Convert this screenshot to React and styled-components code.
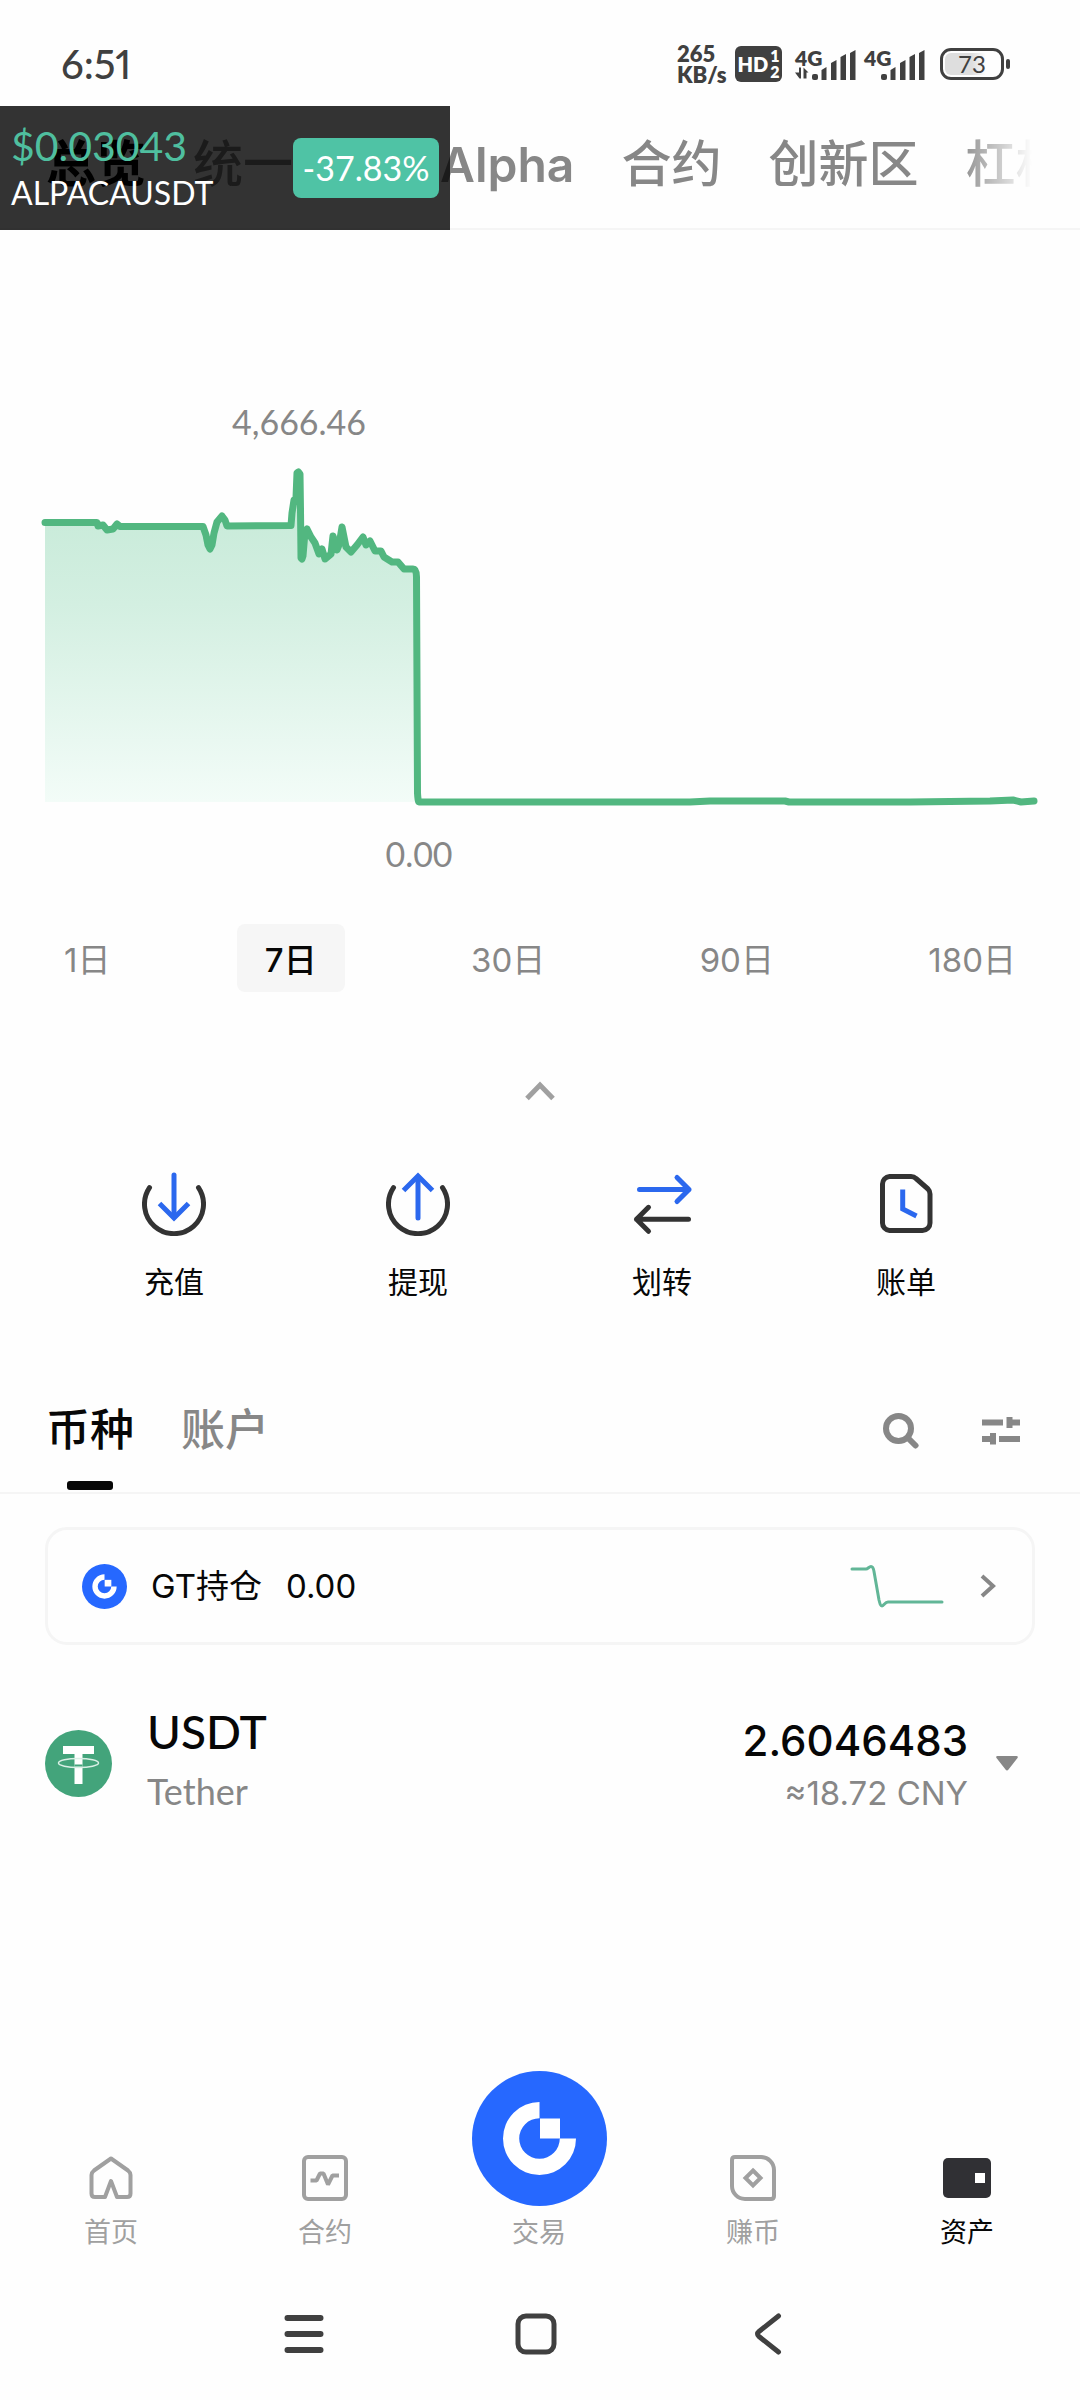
import React, { useState } from 'react';
import styled, { createGlobalStyle } from 'styled-components';

const GlobalStyle = createGlobalStyle`
    * {
        box-sizing: border-box;
    }
    body {
        margin: 0;
        background: #fefefe;
        color: #070707;
        font-family: Inter, 'Noto Sans CJK SC', sans-serif;
    }
    button {
        margin: 0;
        padding: 0;
        border: none;
        background: none;
        color: inherit;
        font: inherit;
        cursor: pointer;
    }
    a {
        color: inherit;
        text-decoration: none;
    }
    svg {
        display: block;
        flex-shrink: 0;
    }
`;

const Page = styled.div`
    display: flex;
    flex-direction: column;
    min-height: 100vh;
    overflow: hidden;
`;

/* status bar */

const StatusBar = styled.div`
    display: flex;
    justify-content: space-between;
    align-items: center;
    height: 106px;
    padding: 22px 70px 0 61px;
    color: #404040;
    font-family: Lato, sans-serif;
`;

const Clock = styled.div`
    font-size: 40px;
    line-height: 48px;
    font-weight: 500;
    font-variant-numeric: proportional-nums;
`;

const StatusIcons = styled.div`
    display: flex;
    align-items: center;
`;

const NetSpeed = styled.div`
    width: 58px;
    font-size: 22px;
    line-height: 21px;
    font-weight: 800;
`;

const HdBadge = styled.div`
    display: flex;
    align-items: center;
    justify-content: center;
    gap: 2px;
    width: 47px;
    height: 36px;
    margin-right: 12px;
    border-radius: 6px;
    background: #404040;
    color: #fff;
    font-size: 20px;
    font-weight: 800;
`;

const HdSlots = styled.span`
    display: flex;
    flex-direction: column;
    font-size: 16px;
    line-height: 16px;
`;

const Signal = styled.div`
    position: relative;
    width: 64px;
    margin-right: 5px;

    span {
        position: absolute;
        top: -1px;
        left: 1px;
        font-size: 21px;
        line-height: 21px;
        font-weight: 800;
    }
`;

const Battery = styled.div`
    display: flex;
    align-items: center;
    margin-left: 8px;

    &::after {
        content: '';
        width: 4px;
        height: 10px;
        margin-left: 2px;
        border-radius: 2px;
        background: #404040;
    }
`;

const BatteryBody = styled.div`
    width: 64px;
    height: 32px;
    padding: 2px;
    border: 3px solid #404040;
    border-radius: 11px;
    font-size: 24px;
    line-height: 22px;
    text-align: center;

    span {
        display: block;
        border-radius: 6px;
        background: linear-gradient(90deg, #dedede 50%, #fefefe 76%);
    }
`;

/* header */

const Header = styled.header`
    position: relative;
    border-bottom: 2px solid #f5f5f5;
`;

const TopTabs = styled.nav`
    display: flex;
    align-items: center;
    gap: 47px;
    height: 122px;
    margin-right: 48px;
    padding: 0 0 6px 46px;
    overflow: hidden;
    mask-image: linear-gradient(90deg, #000 calc(100% - 75px), transparent);
`;

const TopTab = styled.button`
    flex-shrink: 0;
    color: ${({ $active }) => ($active ? '#000' : '#878787')};
    font-size: 50px;
    line-height: 60px;
    font-weight: ${({ $active }) => ($active ? 700 : 500)};
    white-space: nowrap;
`;

const LatinLabel = styled.span`
    font-size: 48px;
    font-weight: 600;
`;

const Ticker = styled.aside`
    position: absolute;
    top: 0;
    left: 0;
    display: flex;
    justify-content: space-between;
    align-items: center;
    width: 450px;
    height: 124px;
    padding: 0 11px;
    background: rgba(0, 0, 0, 0.8);
    color: #fff;
    font-family: Lato, sans-serif;
`;

const TickerPrice = styled.div`
    color: #4fbf9f;
    font-size: 41px;
    line-height: 50px;
`;

const TickerSymbol = styled.div`
    font-size: 32px;
    line-height: 44px;
`;

const TickerChange = styled.div`
    width: 146px;
    border-radius: 8px;
    background: #4fc3a5;
    font-size: 34px;
    line-height: 60px;
    text-align: center;
`;

/* chart */

const Chart = styled.svg`
    width: 100%;
    height: auto;

    text {
        fill: #878787;
        font-family: Lato, sans-serif;
        font-size: 34px;
        text-anchor: middle;
    }
`;

const Ranges = styled.div`
    display: flex;
    justify-content: space-between;
    margin-top: 34px;
    padding: 0 36px;
`;

const RangeButton = styled.button`
    padding: 4px 28px 0;
    border-radius: 8px;
    background: ${({ $active }) => ($active ? '#f6f6f6' : 'none')};
    color: ${({ $active }) => ($active ? '#070707' : '#878787')};
    font-size: 33px;
    line-height: 64px;
    font-weight: ${({ $active }) => ($active ? 500 : 400)};
`;

const Collapse = styled.button`
    align-self: center;
    margin-top: 80px;
    padding: 9px;
`;

/* actions */

const Actions = styled.div`
    display: grid;
    grid-template-columns: repeat(4, 1fr);
    margin-top: 62px;
    padding: 0 52px;
`;

const Action = styled.button`
    display: flex;
    flex-direction: column;
    align-items: center;
    gap: 24px;
    font-size: 30px;
    line-height: 44px;
`;

/* asset list */

const ListHeader = styled.div`
    display: flex;
    justify-content: space-between;
    margin-top: 98px;
    padding: 0 60px 0 46px;
    border-bottom: 2px solid #f5f5f5;
`;

const ListTabs = styled.div`
    display: flex;
    gap: 47px;
`;

const ListTab = styled.button`
    display: flex;
    flex-direction: column;
    align-items: center;
    color: ${({ $active }) => ($active ? '#070707' : '#878787')};
    font-size: 44px;
    line-height: 56px;
    font-weight: 500;

    &::after {
        content: '';
        width: 46px;
        height: 9px;
        margin: 23px 0 2px;
        border-radius: 3px;
        background: ${({ $active }) => ($active ? '#070707' : 'none')};
    }
`;

const ListTools = styled.div`
    display: flex;
    align-items: center;
    gap: 63px;
    padding-bottom: 33px;
`;

const HoldingCard = styled.a`
    display: flex;
    align-items: center;
    margin: 33px 45px 0;
    padding: 0 36px 0 34px;
    height: 118px;
    border: 3px solid #f5f5f5;
    border-radius: 22px;
    font-size: 33px;
    line-height: 46px;
`;

const HoldingName = styled.span`
    margin: 0 24px;
`;

const HoldingTrend = styled.span`
    display: flex;
    align-items: center;
    gap: 36px;
    margin-left: auto;
`;

const AssetRow = styled.div`
    display: flex;
    align-items: center;
    margin-top: 59px;
    padding: 0 62px 0 45px;
`;

const AssetName = styled.div`
    margin-left: 35px;
    font-family: Lato, sans-serif;
`;

const Symbol = styled.div`
    font-size: 46px;
    line-height: 56px;
    font-weight: 500;
`;

const FullName = styled.div`
    color: #878787;
    font-size: 36px;
    line-height: 62px;
`;

const Balance = styled.div`
    margin-left: auto;
    text-align: right;
`;

const Amount = styled.div`
    font-size: 42px;
    line-height: 60px;
    font-weight: 500;
`;

const Fiat = styled.div`
    color: #878787;
    font-size: 33px;
    line-height: 44px;
`;

const Expand = styled.button`
    margin-left: 28px;
`;

/* bottom bars */

const BottomNav = styled.nav`
    display: flex;
    align-items: flex-end;
    margin-top: auto;
    padding: 0 6px 18px 4px;
`;

const NavItem = styled.a`
    display: flex;
    flex: 1;
    flex-direction: column;
    align-items: center;
    gap: 10px;
    color: ${({ $active }) => ($active ? '#070707' : '#a0a0a0')};
    font-size: 27px;
    line-height: 34px;
`;

const SystemBar = styled.div`
    display: flex;
    justify-content: center;
    align-items: center;
    gap: 184px;
    height: 132px;
    padding-right: 9px;
`;

const SignalBars = ({ data }) => (
    <svg width="64" height="32" viewBox="0 0 64 32" fill="#404040">
        {data && (
            <path d="M1 24.5h4v-5h2v11H5.500zM9.500 19.500l5 5h-2v6h-3z" />
        )}
        <rect x="18" y="26" width="6" height="6" rx="2" />
        <path d="M27.500 32v-10l5-3v13zM37 32V15l5.500-3v20zM46.500 32V9l5.500-3v26zM56 32V5l5.500-3v30z" />
    </svg>
);

const GateLogo = ({ size }) => (
    <svg width={size} height={size} viewBox="0 0 135 135">
        <circle cx="67.5" cy="67.5" r="67.5" fill="#2668ff" />
        <path
            d="M67.500 31a36.500 36.500 0 1 0 36.500 36.500H87.800A20.300 20.300 0 1 1 67.500 47.200z"
            fill="#fff"
        />
        <path d="M68 47.500h20v20H68z" fill="#fff" />
    </svg>
);

const Stroke = ({ size = 64, height, color = '#333', width = 5, children }) => (
    <svg
        width={size}
        height={height || size}
        viewBox={`0 0 ${size} ${height || size}`}
        fill="none"
        stroke={color}
        strokeWidth={width}
        strokeLinecap="round"
        strokeLinejoin="round"
    >
        {children}
    </svg>
);

const BLUE = '#2b68ee';

const DepositIcon = () => (
    <Stroke>
        <path d="M7.500 15.700a29.500 29.500 0 1 0 49 0" />
        <path d="M32 3v42" stroke={BLUE} />
        <path d="M17.500 31.500 32 46l14.500-14.500" stroke={BLUE} strokeLinecap="butt" strokeLinejoin="miter" />
    </Stroke>
);

const WithdrawIcon = () => (
    <Stroke>
        <path d="M7.500 15.700a29.500 29.500 0 1 0 49 0" />
        <path d="M32 46V5" stroke={BLUE} />
        <path d="M17.500 18.500 32 4l14.500 14.500" stroke={BLUE} strokeLinecap="butt" strokeLinejoin="miter" />
    </Stroke>
);

const TransferIcon = () => (
    <Stroke>
        <path d="M9.500 17.500H59M47 5.500l12 12-12 12" stroke={BLUE} />
        <path d="M58.500 47.300H6.500M18.500 35.300l-12 12 12 12" />
    </Stroke>
);

const BillIcon = () => (
    <Stroke>
        <path d="M15.500 4.500H37q3 0 5 2L54 17q2 2 2 5v29a7.500 7.500 0 0 1-7.500 7.500h-33A7.500 7.500 0 0 1 8.500 51V12a7.500 7.500 0 0 1 7-7.500z" />
        <path d="M28.700 17.500V37L42.500 44" stroke={BLUE} strokeLinecap="butt" strokeLinejoin="miter" />
    </Stroke>
);

const HomeIcon = () => (
    <Stroke size={48} height={52} color="#a0a0a0" width={4}>
        <path d="M24 4.500 7 16.500Q4.500 18.500 4.500 21v18.500q0 3.500 3.500 3.500h10l6-16 6 16h10q3.500 0 3.500-3.500V21q0-2.500-2.500-4.500z" />
    </Stroke>
);

const ContractIcon = () => (
    <Stroke size={48} height={52} color="#a0a0a0" width={4}>
        <rect x="3" y="3" width="42" height="42" rx="4" />
        <path
            d="M9.500 26.500h6l3.500-7h3.500l4.500 11 4.500-9H38"
            strokeLinecap="butt"
            strokeLinejoin="bevel"
        />
    </Stroke>
);

const EarnIcon = () => (
    <Stroke size={48} height={52} color="#a0a0a0" width={4}>
        <path d="M6 3h26a13 13 0 0 1 13 13v26q0 3-3 3H16A13 13 0 0 1 3 32V6q0-3 3-3z" />
        <path d="M24 16.500 31.500 24 24 31.500 16.500 24z" strokeLinejoin="miter" />
    </Stroke>
);

const WalletIcon = () => (
    <svg width="48" height="52" viewBox="0 0 48 52">
        <rect y="4" width="48" height="40" rx="5" fill="#303034" />
        <rect x="32" y="19" width="10" height="10" fill="#fff" />
    </svg>
);

const TetherIcon = () => (
    <svg width="67" height="67" viewBox="0 0 67 67">
        <circle cx="33.5" cy="33.5" r="33.5" fill="#43a47b" />
        <path d="M18 16h31v8h-11.500v30h-8V24H18z" fill="#fff" />
        <ellipse cx="33.5" cy="33" rx="20" ry="4.500" fill="none" stroke="#d9efe5" strokeWidth="1.500" />
        <path d="M29.500 34.500h8v2h-8z" fill="#43a47b" />
    </svg>
);

const LINE =
    'M45 522.500H97L98 526L103 525L107 530L113 529L117 524L120 526.500H203L206 535L208 545L210 549L212 545L214 533' +
    'L217 522L222 516L225 520L227 526L291 525.500L292 513L294 500L296 498L297 473L298.500 472L300 474L300.500 510L301 558' +
    'L302 559L303 556L305 532L307 529L311 537L315 543L319 554L322 549L325 559L331 554L333 536L337 550L339 545' +
    'L342 527L346 547L351 552L357 545L363 537L366 545L370 541L375 551L381 551L384 557L392 562L398 562L404 569H413' +
    'Q416.500 569 416.500 577L417.500 793Q418 802 419 802';

const TAIL = 'H690L710 801H785L789 802H910L990 801L1013 800L1021 802L1034 801';

const PortfolioChart = () => (
    <Chart viewBox="0 230 1080 660" role="img" aria-label="4,666.46 – 0.00">
        <defs>
            <linearGradient id="area" x1="0" y1="0" x2="0" y2="1">
                <stop offset="0" stopColor="#c4e9d6" />
                <stop offset="0.4" stopColor="#d3efe1" />
                <stop offset="1" stopColor="#f3fcf8" />
            </linearGradient>
        </defs>
        <path d={`${LINE}H45z`} fill="url(#area)" />
        <path
            d={LINE + TAIL}
            fill="none"
            stroke="#52b780"
            strokeWidth="7"
            strokeLinecap="round"
            strokeLinejoin="round"
        />
        <text x="299" y="435">4,666.46</text>
        <text x="419" y="867">0.00</text>
    </Chart>
);

const topTabs = ['总览', '统一账户', 'Alpha', '合约', '创新区', '杠杆'];
const ranges = ['1日', '7日', '30日', '90日', '180日'];
const listTabs = ['币种', '账户'];

const actions = [
    { label: '充值', icon: <DepositIcon /> },
    { label: '提现', icon: <WithdrawIcon /> },
    { label: '划转', icon: <TransferIcon /> },
    { label: '账单', icon: <BillIcon /> },
];

const navItems = [
    { label: '首页', icon: <HomeIcon /> },
    { label: '合约', icon: <ContractIcon /> },
    { label: '交易', icon: <GateLogo size={135} /> },
    { label: '赚币', icon: <EarnIcon /> },
    { label: '资产', icon: <WalletIcon />, active: true },
];

const App = () => {
    const [range, setRange] = useState('7日');
    const [listTab, setListTab] = useState('币种');

    return (
        <Page>
            <GlobalStyle />
            <StatusBar>
                <Clock>6:51</Clock>
                <StatusIcons>
                    <NetSpeed>
                        265
                        <br />
                        KB/s
                    </NetSpeed>
                    <HdBadge>
                        HD
                        <HdSlots>
                            <span>1</span>
                            <span>2</span>
                        </HdSlots>
                    </HdBadge>
                    <Signal>
                        <span>4G</span>
                        <SignalBars data />
                    </Signal>
                    <Signal>
                        <span>4G</span>
                        <SignalBars />
                    </Signal>
                    <Battery>
                        <BatteryBody>
                            <span>73</span>
                        </BatteryBody>
                    </Battery>
                </StatusIcons>
            </StatusBar>

            <Header>
                <TopTabs>
                    {topTabs.map((tab) => (
                        <TopTab key={tab} $active={tab === '总览'}>
                            {tab === 'Alpha' ? <LatinLabel>{tab}</LatinLabel> : tab}
                        </TopTab>
                    ))}
                </TopTabs>
                <Ticker>
                    <div>
                        <TickerPrice>$0.03043</TickerPrice>
                        <TickerSymbol>ALPACAUSDT</TickerSymbol>
                    </div>
                    <TickerChange>-37.83%</TickerChange>
                </Ticker>
            </Header>

            <PortfolioChart />
            <Ranges>
                {ranges.map((item) => (
                    <RangeButton key={item} $active={item === range} onClick={() => setRange(item)}>
                        {item}
                    </RangeButton>
                ))}
            </Ranges>
            <Collapse aria-label="收起">
                <Stroke size={32} height={20} color="#a0a0a0">
                    <path d="M3 17.500 16 4l13 13.500" strokeLinecap="butt" strokeLinejoin="miter" />
                </Stroke>
            </Collapse>

            <Actions>
                {actions.map(({ label, icon }) => (
                    <Action key={label}>
                        {icon}
                        {label}
                    </Action>
                ))}
            </Actions>

            <ListHeader>
                <ListTabs>
                    {listTabs.map((tab) => (
                        <ListTab key={tab} $active={tab === listTab} onClick={() => setListTab(tab)}>
                            {tab}
                        </ListTab>
                    ))}
                </ListTabs>
                <ListTools>
                    <button aria-label="搜索">
                        <Stroke size={36} color="#878787" width={6}>
                            <circle cx="15.5" cy="15.5" r="12.5" />
                            <path d="m25 25 7.500 7.500" />
                        </Stroke>
                    </button>
                    <button aria-label="筛选">
                        <svg width="38" height="28" viewBox="0 0 38 28" fill="#878787">
                            <path d="M0 2.500h21v6H0zM24.500 0h6v2.500H38v6h-7.500V11h-6zM0 19h8v-3h6v11.500H8V25H0zM17 19h21v6H17z" />
                        </svg>
                    </button>
                </ListTools>
            </ListHeader>

            <HoldingCard href="#gt">
                <GateLogo size={45} />
                <HoldingName>GT持仓</HoldingName>
                <span>0.00</span>
                <HoldingTrend>
                    <Stroke size={94} height={46} color="#62b697" width={3}>
                        <path d="M2 6h14c2 0 3-2.500 5-2.500s2.500 2 3 5L29 37c1 4 1.500 6 3 6s3-4 6-4h54" />
                    </Stroke>
                    <Stroke size={16} height={24} color="#878787" width={4}>
                        <path d="m2 2 11 10-11 10" strokeLinecap="butt" strokeLinejoin="miter" />
                    </Stroke>
                </HoldingTrend>
            </HoldingCard>

            <AssetRow>
                <TetherIcon />
                <AssetName>
                    <Symbol>USDT</Symbol>
                    <FullName>Tether</FullName>
                </AssetName>
                <Balance>
                    <Amount>2.6046483</Amount>
                    <Fiat>≈18.72 CNY</Fiat>
                </Balance>
                <Expand aria-label="展开">
                    <svg width="22" height="15" viewBox="0 0 22 15" fill="#878787">
                        <path d="M1.500 0h19q2 0 1 2l-9 11.500q-1.500 2-3 0L.500 2q-1-2 1-2z" />
                    </svg>
                </Expand>
            </AssetRow>

            <BottomNav>
                {navItems.map(({ label, icon, active }) => (
                    <NavItem key={label} href={`#${label}`} $active={active}>
                        {icon}
                        {label}
                    </NavItem>
                ))}
            </BottomNav>

            <SystemBar>
                <button aria-label="菜单">
                    <Stroke size={48} color="#404040" width={6}>
                        <path d="M7.500 8h33M7.500 24h33M7.500 40h33" />
                    </Stroke>
                </button>
                <button aria-label="主屏幕">
                    <Stroke size={48} color="#404040" width={5}>
                        <rect x="6" y="6" width="36" height="36" rx="8" />
                    </Stroke>
                </button>
                <button aria-label="返回">
                    <Stroke size={48} color="#404040" width={5}>
                        <path d="M34.500 6 15 21.500q-3 2.500 0 5L34.500 42" />
                    </Stroke>
                </button>
            </SystemBar>
        </Page>
    );
};

export default App;
